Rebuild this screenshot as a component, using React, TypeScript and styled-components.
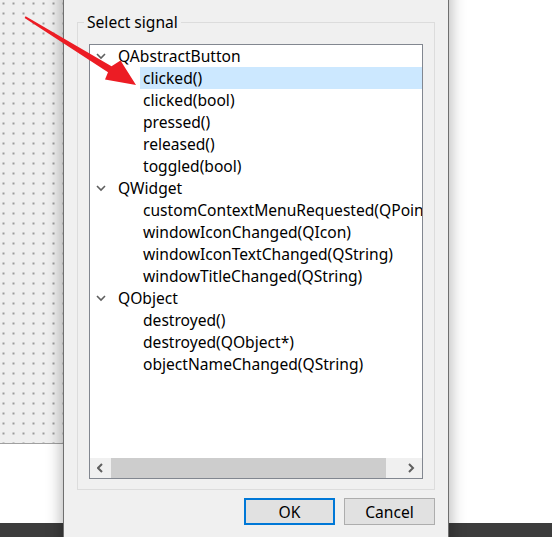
import React from 'react'
import styled, { createGlobalStyle } from 'styled-components'

const GlobalStyle = createGlobalStyle`
    html, body {
        margin: 0;
        padding: 0;
        background: #ffffff;
    }
    body {
        font-family: "Noto Sans", "Open Sans", "Liberation Sans", sans-serif;
        color: #000000;
    }
`

interface Group {
    name: string
    signals: string[]
}

const groups: Group[] = [
    { name: 'QAbstractButton', signals: ['clicked()', 'clicked(bool)', 'pressed()', 'released()', 'toggled(bool)'] },
    { name: 'QWidget', signals: ['customContextMenuRequested(QPoint)', 'windowIconChanged(QIcon)', 'windowIconTextChanged(QString)', 'windowTitleChanged(QString)'] },
    { name: 'QObject', signals: ['destroyed()', 'destroyed(QObject*)', 'objectNameChanged(QString)'] },
]

const Chevron: React.FC<{ dir: 'down' | 'left' | 'right' }> = ({ dir }) => {
    const points = dir === 'down' ? '1,1 5,5 9,1' : dir === 'left' ? '5,1 1,5 5,9' : '1,1 5,5 1,9'
    const size = dir === 'down' ? { width: 10, height: 7 } : { width: 7, height: 10 }
    return (
        <svg {...size} viewBox={dir === 'down' ? '0 0 10 7' : '0 0 7 10'}>
            <polyline points={points} fill="none" stroke="#5f5f5f" strokeWidth={dir === 'down' ? 1.6 : 2} />
        </svg>
    )
}

const App: React.FC = () => {
    return (
        <Screen>
            <GlobalStyle />
            <Desktop>
                <SidePane>
                    <DotGrid />
                </SidePane>
            </Desktop>
            <Taskbar />

            <Dialog>
                <GroupBox>
                    <legend>Select signal</legend>
                    <Tree>
                        <TreeBody>
                            {groups.map(group => (
                                <React.Fragment key={group.name}>
                                    <TopRow>
                                        <Expander><Chevron dir="down" /></Expander>
                                        {group.name}
                                    </TopRow>
                                    {group.signals.map((signal, i) => (
                                        <ChildRow key={signal + i} $selected={group.name === 'QAbstractButton' && i === 0}>
                                            {signal}
                                        </ChildRow>
                                    ))}
                                </React.Fragment>
                            ))}
                        </TreeBody>
                        <HScrollBar>
                            <ScrollArrow><Chevron dir="left" /></ScrollArrow>
                            <Track>
                                <Thumb />
                            </Track>
                            <ScrollArrow><Chevron dir="right" /></ScrollArrow>
                        </HScrollBar>
                    </Tree>
                </GroupBox>

                <ButtonRow>
                    <DialogButton $default>OK</DialogButton>
                    <DialogButton>Cancel</DialogButton>
                </ButtonRow>
            </Dialog>

            <Pointer viewBox="0 0 552 537" width={552} height={537}>
                <polygon
                    points="24.6,17.9 25.6,16.2 111.5,66.3 120.5,60.5 136,85 105,79.5 108,72.3"
                    fill="#ec1c24"
                />
            </Pointer>
        </Screen>
    )
}

const Screen = styled.div`
    position: relative;
    width: 552px;
    height: 537px;
    overflow: hidden;
    display: flex;
    flex-direction: column;
    background: #ffffff;
`

const Desktop = styled.div`
    flex: 1;
    display: flex;
`

const SidePane = styled.div`
    width: 63px;
    display: flex;
    flex-direction: column;
`

const DotGrid = styled.div`
    height: 443px;
    border-bottom: 1px solid #a0a0a0;
    background-color: #efefef;
    background-image: radial-gradient(circle, #9c9c9c 0.75px, transparent 0.9px);
    background-size: 10px 10px;
    background-position: -1.5px -1.5px;
`

const Taskbar = styled.div`
    height: 14px;
    background: #3c3c3c;
`

const Dialog = styled.div`
    position: absolute;
    left: 63px;
    top: -30px;
    bottom: -40px;
    width: 386px;
    box-sizing: border-box;
    border: 1px solid #6f6f6f;
    background: #f0f0f0;
    box-shadow: 0 0 14px 2px rgba(0, 0, 0, 0.28);
    padding: 41px 13px 0 13px;
    display: flex;
    flex-direction: column;
`

const GroupBox = styled.fieldset`
    margin: 0;
    border: 1px solid #dcdcdc;
    padding: 12px 0 10px 0;
    min-width: 0;

    legend {
        margin-left: 6px;
        padding: 0 3px;
        font-size: 15.6px;
        line-height: 20px;
        color: #000000;
    }
`

const Tree = styled.div`
    height: 435px;
    margin: 0 11px;
    box-sizing: border-box;
    border: 1px solid #828790;
    background: #ffffff;
    display: flex;
    flex-direction: column;
    overflow: hidden;
`

const TreeBody = styled.div`
    flex: 1;
    overflow: hidden;
    font-size: 15.6px;
`

const TopRow = styled.div`
    height: 22px;
    display: flex;
    align-items: center;
    white-space: nowrap;
    padding-bottom: 1px;
    box-sizing: border-box;
`

const Expander = styled.span`
    width: 28px;
    display: flex;
    align-items: center;
    padding-left: 6px;
    padding-top: 1px;
    box-sizing: border-box;
`

const ChildRow = styled.div<{ $selected?: boolean }>`
    height: 22px;
    margin-left: 50px;
    padding-left: 3px;
    padding-bottom: 1px;
    box-sizing: border-box;
    display: flex;
    align-items: center;
    white-space: nowrap;
    background: ${p => (p.$selected ? '#cce8ff' : 'transparent')};
`

const HScrollBar = styled.div`
    height: 20px;
    display: flex;
    background: #f0f0f0;
`

const ScrollArrow = styled.div`
    width: 21px;
    display: flex;
    align-items: center;
    justify-content: center;
`

const Track = styled.div`
    flex: 1;
    display: flex;
`

const Thumb = styled.div`
    width: 275px;
    background: #cdcdcd;
`

const ButtonRow = styled.div`
    display: flex;
    justify-content: flex-end;
    gap: 9px;
    margin-top: 8px;
`

const DialogButton = styled.button<{ $default?: boolean }>`
    width: 91px;
    height: 27px;
    box-sizing: border-box;
    margin: 0;
    padding: 0;
    background: #e1e1e1;
    border: ${p => (p.$default ? '2px solid #0078d7' : '1px solid #adadad')};
    font-family: "Noto Sans", "Open Sans", "Liberation Sans", sans-serif;
    font-size: 15.6px;
    color: #000000;
`

const Pointer = styled.svg`
    position: absolute;
    left: 0;
    top: 0;
    pointer-events: none;
`

export default App
